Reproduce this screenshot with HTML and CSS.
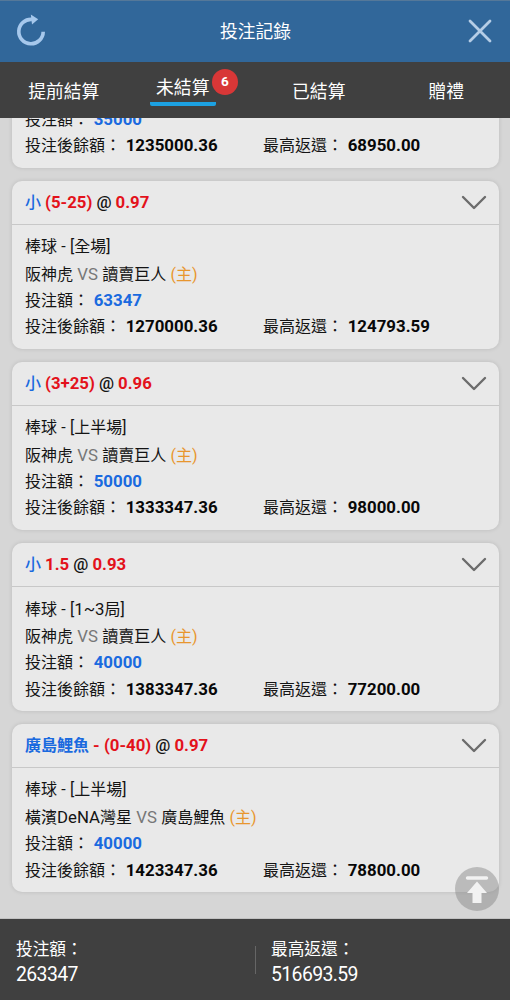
FILE: index.html
```html
<!DOCTYPE html>
<html lang="zh-Hant">
<head>
<meta charset="utf-8">
<title>投注記錄</title>
<link rel="stylesheet" href="styles.css">
</head>
<body>
<div class="app">
  <header class="topbar">
    <svg class="refresh" width="34" height="34" viewBox="0 0 34 34"><path d="M28.2 17.7A12.2 12.2 0 1 1 17 5.4" fill="none" stroke="#a6c8ec" stroke-width="3.6"/><path d="M15.8 0.4L23.2 5.3L17 10.4Z" fill="#a6c8ec"/></svg>
    <h1 class="title">投注記錄</h1>
    <svg class="close" width="24" height="24" viewBox="0 0 24 24"><path d="M2 2L22 22M22 2L2 22" stroke="#b5cde6" stroke-width="2.8" stroke-linecap="round"/></svg>
  </header>
  <nav class="tabs">
    <div class="tab">提前結算</div>
    <div class="tab tab-active"><span class="tab-label">未結算<b class="badge">6</b></span></div>
    <div class="tab">已結算</div>
    <div class="tab">贈禮</div>
  </nav>
  <main class="list">
    <section class="card card-first">
      <div class="body">
        <div class="row">投注額：<b class="num stake">35000</b></div>
        <div class="row split"><span>投注後餘額：<b class="num">1235000.36</b></span><span>最高返還：<b class="num">68950.00</b></span></div>
      </div>
    </section>
    <section class="card">
      <div class="head"><div class="pick"><span class="side">小</span> <b class="odds">(5-25)</b> <span class="at">@</span> <b class="odds">0.97</b></div><svg class="chevron" width="26" height="16" viewBox="0 0 26 16"><path d="M2 2L13 13L24 2" /></svg></div>
      <div class="body">
        <div class="row">棒球 - [全場]</div>
        <div class="row">阪神虎 <span class="latin vs">VS</span> 讀賣巨人 <span class="home">(主)</span></div>
        <div class="row">投注額：<b class="num stake">63347</b></div>
        <div class="row split"><span>投注後餘額：<b class="num">1270000.36</b></span><span>最高返還：<b class="num">124793.59</b></span></div>
      </div>
    </section>
    <section class="card">
      <div class="head"><div class="pick"><span class="side">小</span> <b class="odds">(3+25)</b> <span class="at">@</span> <b class="odds">0.96</b></div><svg class="chevron" width="26" height="16" viewBox="0 0 26 16"><path d="M2 2L13 13L24 2" /></svg></div>
      <div class="body">
        <div class="row">棒球 - [上半場]</div>
        <div class="row">阪神虎 <span class="latin vs">VS</span> 讀賣巨人 <span class="home">(主)</span></div>
        <div class="row">投注額：<b class="num stake">50000</b></div>
        <div class="row split"><span>投注後餘額：<b class="num">1333347.36</b></span><span>最高返還：<b class="num">98000.00</b></span></div>
      </div>
    </section>
    <section class="card">
      <div class="head"><div class="pick"><span class="side">小</span> <b class="odds">1.5</b> <span class="at">@</span> <b class="odds">0.93</b></div><svg class="chevron" width="26" height="16" viewBox="0 0 26 16"><path d="M2 2L13 13L24 2" /></svg></div>
      <div class="body">
        <div class="row">棒球 - [<span class="latin">1~3</span>局]</div>
        <div class="row">阪神虎 <span class="latin vs">VS</span> 讀賣巨人 <span class="home">(主)</span></div>
        <div class="row">投注額：<b class="num stake">40000</b></div>
        <div class="row split"><span>投注後餘額：<b class="num">1383347.36</b></span><span>最高返還：<b class="num">77200.00</b></span></div>
      </div>
    </section>
    <section class="card">
      <div class="head"><div class="pick"><b class="side-team">廣島鯉魚</b> <b class="odds">- (0-40)</b> <span class="at">@</span> <b class="odds">0.97</b></div><svg class="chevron" width="26" height="16" viewBox="0 0 26 16"><path d="M2 2L13 13L24 2" /></svg></div>
      <div class="body">
        <div class="row">棒球 - [上半場]</div>
        <div class="row">橫濱<span class="latin">DeNA</span>灣星 <span class="latin vs">VS</span> 廣島鯉魚 <span class="home">(主)</span></div>
        <div class="row">投注額：<b class="num stake">40000</b></div>
        <div class="row split"><span>投注後餘額：<b class="num">1423347.36</b></span><span>最高返還：<b class="num">78800.00</b></span></div>
      </div>
    </section>
    <div class="to-top"><svg width="24" height="28" viewBox="0 0 24 28"><path d="M2.5 2H21.5" stroke="#f2f2f2" stroke-width="3.4" stroke-linecap="round"/><path d="M12 5.5L22 17H16.5V27H7.5V17H2Z" fill="#f2f2f2"/></svg></div>
  </main>
  <footer class="summary">
    <div class="total"><div>投注額：</div><div class="amount">263347</div></div>
    <div class="total total-return"><div>最高返還：</div><div class="amount">516693.59</div></div>
  </footer>
</div>
</body>
</html>
```
FILE: styles.css
```css
* { box-sizing: border-box; }
body { margin: 0; font-family: Roboto, "Noto Sans CJK TC", sans-serif; font-size: 16px; color: #141414; }
.app { width: 510px; height: 1000px; display: flex; flex-direction: column; background: #d6d6d6; overflow: hidden; }

.topbar { flex: 0 0 62px; display: flex; align-items: center; justify-content: space-between; padding: 0 18px 0 15px; background: #31679a; border-top: 1px solid #557899; }
.refresh { margin-top: -1px; }
.close { margin-top: -1px; }
.title { margin: 0 6px 0 0; font-size: 17.8px; font-weight: 400; color: #fff; line-height: 26px; }

.tabs { flex: 0 0 56px; display: grid; grid-template-columns: repeat(4, 1fr); background: #404040; color: #fff; font-size: 17.8px; line-height: 26px; }
.tab { display: flex; justify-content: center; padding: 17px 0 0; }
.tab-active { padding: 13px 0 0; }
.tab-label { position: relative; height: 30.5px; width: 66px; margin-left: -17px; text-align: center; border-bottom: 4px solid #1ca1e2; border-radius: 2px; white-space: nowrap; }
.badge { position: absolute; left: 62px; top: -6.5px; width: 26px; height: 26px; border-radius: 50%; background: #d83737; font-size: 13.5px; line-height: 25px; text-align: center; }

.list { position: relative; flex: 1 1 0; min-height: 0; overflow: hidden; padding: 0 11px 0 12px; border-bottom: 1px solid #c2c2c2; }
.card { height: 168.2px; margin-bottom: 12.9px; border-radius: 10px; background: #e9e9e9; box-shadow: 0 0 4px rgba(0, 0, 0, .13); }
.card-first { height: 62px; margin-top: -12px; border-radius: 0 0 10px 10px; }
.card-first .body { padding: 0 13px; }
.head { height: 43.8px; display: flex; align-items: center; justify-content: space-between; padding: 0 12px 0 13px; border-bottom: 1px solid #c8c8c8; }
.pick { font-size: 16px; line-height: 26px; color: #141414; white-space: nowrap; word-spacing: .1px; }
.side { color: #1a6adf; font-weight: 500; }
.side-team { color: #1a6adf; }
.odds { color: #e3121b; font-size: 16.8px; }
.at { font-size: 16.8px; font-weight: 500; }
.chevron { margin-top: 1px; fill: none; stroke: #6c6c6c; stroke-width: 2.4; stroke-linecap: round; stroke-linejoin: round; }
.body { padding: 9.5px 13px 0; }
.row { height: 26.4px; line-height: 26.4px; white-space: nowrap; word-spacing: .3px; }
.split { display: grid; grid-template-columns: 238px 1fr; }
.num { margin-left: 4.7px; font-size: 16.85px; color: #080808; }
.stake { color: #1a6adf; }
.latin { font-size: 16.8px; }
.vs { color: #777; }
.home { color: #e8962e; }

.to-top { position: absolute; left: 455px; top: 749px; width: 44px; height: 44px; padding-top: 1px; display: flex; align-items: center; justify-content: center; border-radius: 50%; background: rgba(130, 130, 130, .45); }

.summary { flex: 0 0 81px; display: grid; grid-template-columns: 1fr 1fr; align-items: center; padding-top: 5px; background: #404040; color: #fff; font-size: 16.7px; line-height: 25px; }
.total { padding-left: 16px; }
.total-return { position: relative; }
.total-return::before { content: ""; position: absolute; left: 0; top: 9px; width: 1px; height: 28px; background: #666; }
.amount { font-size: 19.4px; letter-spacing: -.6px; }
```
